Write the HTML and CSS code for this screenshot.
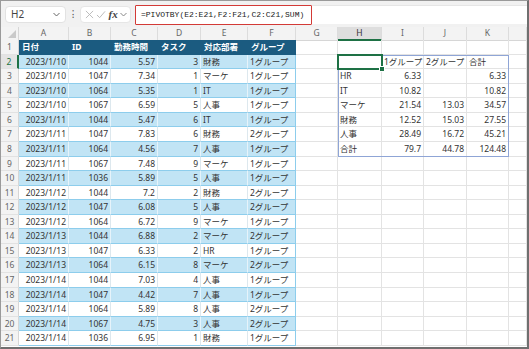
FILE: index.html
```html
<!DOCTYPE html>
<html lang="ja">

<head>
    <meta charset="UTF-8">
    <title>PIVOTBY</title>
    <link rel="stylesheet" href="styles.css">
</head>

<body>
    <div class="window">
        <!-- Formula bar -->
        <div class="formula-bar">
            <div class="name-box">
                <span>H2</span>
                <svg class="chev" width="7" height="5" viewBox="0 0 7 5"><path d="M0.5 1 L3.5 4 L6.5 1" fill="none" stroke="#666" stroke-width="1"/></svg>
            </div>
            <div class="dots">⁝</div>
            <div class="fx-box">
                <svg width="9" height="9" viewBox="0 0 10 10"><path d="M1 1 L9 9 M9 1 L1 9" stroke="#b5b5b5" stroke-width="1"/></svg>
                <svg width="10" height="9" viewBox="0 0 10 10"><path d="M0.5 5.5 L3.5 8.5 L9.5 1.5" fill="none" stroke="#b5b5b5" stroke-width="1"/></svg>
                <span class="fx">fx</span>
                <svg class="chev" width="7" height="5" viewBox="0 0 7 5"><path d="M0.5 1 L3.5 4 L6.5 1" fill="none" stroke="#888" stroke-width="1"/></svg>
            </div>
            <div class="formula">
                <div class="formula-text">=PIVOTBY(E2:E21,F2:F21,C2:C21,SUM)</div>
            </div>
        </div>

        <!-- Sheet -->
        <div class="sheet">
            <div class="row head">
                <div class="corner"><svg width="8" height="8" viewBox="0 0 8 8"><path d="M8 0 L8 8 L0 8 Z" fill="#c9c9c9"/></svg></div>
                <div class="ch">A</div><div class="ch">B</div><div class="ch">C</div><div class="ch">D</div>
                <div class="ch">E</div><div class="ch">F</div><div class="ch">G</div><div class="ch sel">H</div>
                <div class="ch">I</div><div class="ch">J</div><div class="ch">K</div><div class="ch"></div>
            </div>

            <div class="row">
                <div class="rh">1</div>
                <div class="c th">日付</div><div class="c th">ID</div><div class="c th">勤務時間</div>
                <div class="c th">タスク</div><div class="c th">対応部署</div><div class="c th">グループ</div>
                <div class="c"></div><div class="c"></div><div class="c"></div><div class="c"></div><div class="c"></div><div class="c"></div>
            </div>

            <div class="row band">
                <div class="rh sel">2</div>
                <div class="c t n">2023/1/10</div><div class="c t n">1044</div><div class="c t n">5.57</div>
                <div class="c t n">3</div><div class="c t">財務</div><div class="c t last">1グループ</div>
                <div class="c"></div><div class="c"></div><div class="c">1グループ</div><div class="c">2グループ</div><div class="c">合計</div><div class="c"></div>
            </div>
            <div class="row">
                <div class="rh">3</div>
                <div class="c t n">2023/1/10</div><div class="c t n">1047</div><div class="c t n">7.34</div>
                <div class="c t n">1</div><div class="c t">マーケ</div><div class="c t last">1グループ</div>
                <div class="c"></div><div class="c">HR</div><div class="c n">6.33</div><div class="c n"></div><div class="c n">6.33</div><div class="c"></div>
            </div>
            <div class="row band">
                <div class="rh">4</div>
                <div class="c t n">2023/1/10</div><div class="c t n">1064</div><div class="c t n">5.35</div>
                <div class="c t n">1</div><div class="c t">IT</div><div class="c t last">1グループ</div>
                <div class="c"></div><div class="c">IT</div><div class="c n">10.82</div><div class="c n"></div><div class="c n">10.82</div><div class="c"></div>
            </div>
            <div class="row">
                <div class="rh">5</div>
                <div class="c t n">2023/1/10</div><div class="c t n">1067</div><div class="c t n">6.59</div>
                <div class="c t n">5</div><div class="c t">人事</div><div class="c t last">1グループ</div>
                <div class="c"></div><div class="c">マーケ</div><div class="c n">21.54</div><div class="c n">13.03</div><div class="c n">34.57</div><div class="c"></div>
            </div>
            <div class="row band">
                <div class="rh">6</div>
                <div class="c t n">2023/1/11</div><div class="c t n">1044</div><div class="c t n">5.47</div>
                <div class="c t n">6</div><div class="c t">IT</div><div class="c t last">1グループ</div>
                <div class="c"></div><div class="c">財務</div><div class="c n">12.52</div><div class="c n">15.03</div><div class="c n">27.55</div><div class="c"></div>
            </div>
            <div class="row">
                <div class="rh">7</div>
                <div class="c t n">2023/1/11</div><div class="c t n">1047</div><div class="c t n">7.83</div>
                <div class="c t n">6</div><div class="c t">財務</div><div class="c t last">2グループ</div>
                <div class="c"></div><div class="c">人事</div><div class="c n">28.49</div><div class="c n">16.72</div><div class="c n">45.21</div><div class="c"></div>
            </div>
            <div class="row band">
                <div class="rh">8</div>
                <div class="c t n">2023/1/11</div><div class="c t n">1064</div><div class="c t n">4.56</div>
                <div class="c t n">7</div><div class="c t">人事</div><div class="c t last">1グループ</div>
                <div class="c"></div><div class="c">合計</div><div class="c n">79.7</div><div class="c n">44.78</div><div class="c n">124.48</div><div class="c"></div>
            </div>
            <div class="row">
                <div class="rh">9</div>
                <div class="c t n">2023/1/11</div><div class="c t n">1067</div><div class="c t n">7.48</div>
                <div class="c t n">9</div><div class="c t">マーケ</div><div class="c t last">1グループ</div>
                <div class="c"></div><div class="c"></div><div class="c"></div><div class="c"></div><div class="c"></div><div class="c"></div>
            </div>
            <div class="row band">
                <div class="rh">10</div>
                <div class="c t n">2023/1/11</div><div class="c t n">1036</div><div class="c t n">5.89</div>
                <div class="c t n">5</div><div class="c t">人事</div><div class="c t last">1グループ</div>
                <div class="c"></div><div class="c"></div><div class="c"></div><div class="c"></div><div class="c"></div><div class="c"></div>
            </div>
            <div class="row">
                <div class="rh">11</div>
                <div class="c t n">2023/1/12</div><div class="c t n">1044</div><div class="c t n">7.2</div>
                <div class="c t n">2</div><div class="c t">財務</div><div class="c t last">2グループ</div>
                <div class="c"></div><div class="c"></div><div class="c"></div><div class="c"></div><div class="c"></div><div class="c"></div>
            </div>
            <div class="row band">
                <div class="rh">12</div>
                <div class="c t n">2023/1/12</div><div class="c t n">1047</div><div class="c t n">6.08</div>
                <div class="c t n">5</div><div class="c t">人事</div><div class="c t last">2グループ</div>
                <div class="c"></div><div class="c"></div><div class="c"></div><div class="c"></div><div class="c"></div><div class="c"></div>
            </div>
            <div class="row">
                <div class="rh">13</div>
                <div class="c t n">2023/1/12</div><div class="c t n">1064</div><div class="c t n">6.72</div>
                <div class="c t n">9</div><div class="c t">マーケ</div><div class="c t last">1グループ</div>
                <div class="c"></div><div class="c"></div><div class="c"></div><div class="c"></div><div class="c"></div><div class="c"></div>
            </div>
            <div class="row band">
                <div class="rh">14</div>
                <div class="c t n">2023/1/13</div><div class="c t n">1044</div><div class="c t n">6.88</div>
                <div class="c t n">2</div><div class="c t">マーケ</div><div class="c t last">2グループ</div>
                <div class="c"></div><div class="c"></div><div class="c"></div><div class="c"></div><div class="c"></div><div class="c"></div>
            </div>
            <div class="row">
                <div class="rh">15</div>
                <div class="c t n">2023/1/13</div><div class="c t n">1047</div><div class="c t n">6.33</div>
                <div class="c t n">2</div><div class="c t">HR</div><div class="c t last">1グループ</div>
                <div class="c"></div><div class="c"></div><div class="c"></div><div class="c"></div><div class="c"></div><div class="c"></div>
            </div>
            <div class="row band">
                <div class="rh">16</div>
                <div class="c t n">2023/1/13</div><div class="c t n">1064</div><div class="c t n">6.15</div>
                <div class="c t n">8</div><div class="c t">マーケ</div><div class="c t last">2グループ</div>
                <div class="c"></div><div class="c"></div><div class="c"></div><div class="c"></div><div class="c"></div><div class="c"></div>
            </div>
            <div class="row">
                <div class="rh">17</div>
                <div class="c t n">2023/1/14</div><div class="c t n">1044</div><div class="c t n">7.03</div>
                <div class="c t n">4</div><div class="c t">人事</div><div class="c t last">1グループ</div>
                <div class="c"></div><div class="c"></div><div class="c"></div><div class="c"></div><div class="c"></div><div class="c"></div>
            </div>
            <div class="row band">
                <div class="rh">18</div>
                <div class="c t n">2023/1/14</div><div class="c t n">1047</div><div class="c t n">4.42</div>
                <div class="c t n">7</div><div class="c t">人事</div><div class="c t last">1グループ</div>
                <div class="c"></div><div class="c"></div><div class="c"></div><div class="c"></div><div class="c"></div><div class="c"></div>
            </div>
            <div class="row">
                <div class="rh">19</div>
                <div class="c t n">2023/1/14</div><div class="c t n">1064</div><div class="c t n">5.89</div>
                <div class="c t n">8</div><div class="c t">人事</div><div class="c t last">2グループ</div>
                <div class="c"></div><div class="c"></div><div class="c"></div><div class="c"></div><div class="c"></div><div class="c"></div>
            </div>
            <div class="row band">
                <div class="rh">20</div>
                <div class="c t n">2023/1/14</div><div class="c t n">1067</div><div class="c t n">4.75</div>
                <div class="c t n">3</div><div class="c t">人事</div><div class="c t last">2グループ</div>
                <div class="c"></div><div class="c"></div><div class="c"></div><div class="c"></div><div class="c"></div><div class="c"></div>
            </div>
            <div class="row">
                <div class="rh">21</div>
                <div class="c t n">2023/1/14</div><div class="c t n">1036</div><div class="c t n">6.95</div>
                <div class="c t n">1</div><div class="c t">財務</div><div class="c t last">1グループ</div>
                <div class="c"></div><div class="c"></div><div class="c"></div><div class="c"></div><div class="c"></div><div class="c"></div>
            </div>

            <!-- spill range and active cell overlays -->
            <div class="spill"></div>
            <div class="active"><span class="handle"></span></div>
        </div>
    </div>
</body>

</html>
```

FILE: styles.css
```css
body {
    margin: 0;
    padding: 0;
    font-family: "Noto Sans", "Noto Sans CJK JP", sans-serif;
    font-size: 8.5px;
    color: #333;
}

.window {
    width: 529px;
    height: 349px;
    box-sizing: border-box;
    border: 1px solid #9a9a9a;
    border-right: 2px solid #6f6f6f;
    border-bottom: 2px solid #6f6f6f;
    overflow: hidden;
    background-color: #fff;
}

/* formula bar */
.formula-bar {
    display: flex;
    align-items: center;
    height: 26px;
    background-color: #f1f1f1;
    padding-left: 4px;
    box-sizing: border-box;
}

.name-box {
    display: flex;
    align-items: center;
    justify-content: space-between;
    width: 61px;
    height: 17px;
    box-sizing: border-box;
    padding: 0 5px 0 5px;
    background-color: #fff;
    border: 1px solid #e2e2e2;
    border-radius: 4px;
    font-size: 10px;
    color: #444;
}

.dots {
    width: 14px;
    text-align: center;
    color: #555;
    font-size: 10px;
}

.fx-box {
    display: flex;
    align-items: center;
    justify-content: space-between;
    width: 51px;
    height: 17px;
    box-sizing: border-box;
    padding: 0 3px 0 4px;
    background-color: #fff;
    border: 1px solid #e6e6e6;
    border-radius: 4px;
}

.fx {
    font-family: "Liberation Serif", serif;
    font-style: italic;
    font-weight: bold;
    font-size: 11px;
    color: #444;
}

.formula {
    flex: 1;
    height: 18px;
    margin-left: 4px;
    background-color: #fff;
    border-top: 1px solid #e6e6e6;
    display: flex;
    align-items: center;
}

.formula-text {
    width: 177px;
    height: 20px;
    box-sizing: border-box;
    border: 1.5px solid #d33a36;
    border-radius: 1px;
    padding-left: 5px;
    font-family: "Liberation Mono", monospace;
    font-size: 8px;
    line-height: 17px;
    color: #222;
}

/* sheet grid */
.sheet {
    position: relative;
}

.row {
    display: grid;
    grid-template-columns: 18px 50px 42px 47px 43px 47px 48px 42px 44px 42px 43px 42px 1fr;
    height: 14.57px;
    line-height: 13.5px;
}

.row.head {
    height: 13px;
    line-height: 12px;
    background-color: #f3f3f3;
}

.corner {
    display: flex;
    align-items: flex-end;
    justify-content: flex-end;
    padding: 0 2px 2px 0;
    border-right: 1px solid #d6d6d6;
    border-bottom: 1px solid #d6d6d6;
}

.ch {
    text-align: center;
    color: #666;
    border-right: 1px solid #dcdcdc;
    border-bottom: 1px solid #d6d6d6;
}

.ch.sel {
    background-color: #dedede;
    color: #333;
    border-bottom: 2px solid #1e7145;
}

.rh {
    text-align: center;
    color: #666;
    background-color: #f3f3f3;
    border-right: 1px solid #d6d6d6;
    border-bottom: 1px solid #e2e2e2;
}

.rh.sel {
    color: #1e7145;
    background-color: #e4e4e4;
    border-right: 2px solid #1e7145;
}

.c {
    padding: 0 2px;
    white-space: nowrap;
    overflow: hidden;
    border-right: 1px solid #e3e3e3;
    border-bottom: 1px solid #e3e3e3;
}

.n {
    text-align: right;
}

/* table styling */
.th {
    background-color: #1b5b80;
    color: #fff;
    font-weight: bold;
    padding-left: 3px;
    border-right-color: #1b5b80;
    border-bottom-color: #1b5b80;
}

.t {
    border-bottom-color: #8dcdec;
    border-right-color: #dde8ee;
}

.band .t {
    background-color: #c1e4f5;
    border-right-color: #e6f3fa;
}

.t.last {
    border-right-color: #8dcdec;
}

/* overlays */
.spill {
    position: absolute;
    left: 337px;
    top: 27.57px;
    width: 171px;
    height: 102px;
    box-sizing: border-box;
    border: 1px solid #8fa5d6;
    pointer-events: none;
}

.active {
    position: absolute;
    left: 336px;
    top: 26.57px;
    width: 46px;
    height: 16.57px;
    box-sizing: border-box;
    border: 2px solid #1e7145;
}

.handle {
    position: absolute;
    right: -4px;
    bottom: -4px;
    width: 4px;
    height: 4px;
    background-color: #1e7145;
    border: 1px solid #fff;
}
```
